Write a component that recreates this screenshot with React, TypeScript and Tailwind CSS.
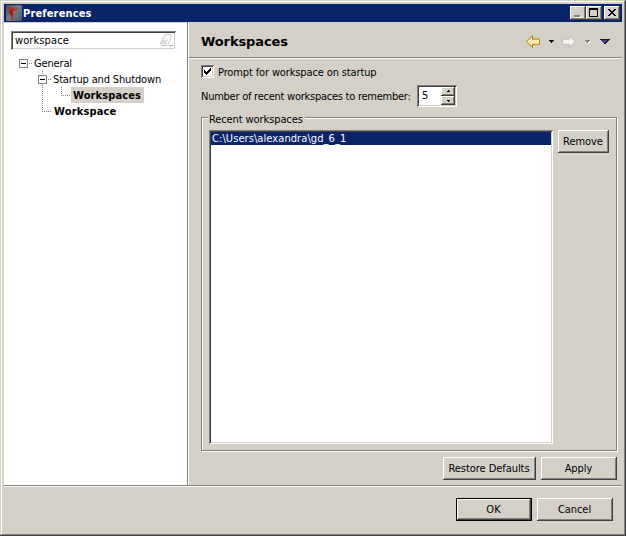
import React from 'react';

const raised =
  'shadow-[inset_-1px_-1px_#404040,inset_1px_1px_#fff,inset_-2px_-2px_#808080]';
const sunken =
  'shadow-[inset_1px_1px_#808080,inset_-1px_-1px_#fff,inset_2px_2px_#404040,inset_-2px_-2px_#d4d0c8]';

function Button({ label, className = '' }: { label: string; className?: string }) {
  return (
    <button className={`flex h-[23px] items-center justify-center whitespace-nowrap bg-[#d4d0c8] pr-px tracking-[-0.05px] ${raised} ${className}`}>
      {label}
    </button>
  );
}

function AppIcon() {
  return (
    <svg width="16" height="16" viewBox="0 0 16 16" className="shrink-0">
      <defs>
        <linearGradient id="tile" x2="1" y2="1">
          <stop stopColor="#4c5358" />
          <stop offset=".5" stopColor="#6f7b81" />
          <stop offset="1" stopColor="#4a5c66" />
        </linearGradient>
      </defs>
      <rect width="16" height="16" rx="1" fill="url(#tile)" />
      <path d="M1 1l2 1 1.500 2L6 2.500h1.500V4L14 3.200 8 5.500 6.500 7.500 7 10l-.5 5h-1L5 10 3 8l.5-2.500z" fill="#cc1c1c" />
      <path d="M3 5.500l3 .5 1 3-2 1-2-2z" fill="#a81418" />
    </svg>
  );
}

function TitleButton({ children, className }: { children: React.ReactNode; className: string }) {
  return (
    <button className={`h-[14px] w-4 bg-[#d4d0c8] ${raised} ${className}`}>
      <svg width="16" height="14" shapeRendering="crispEdges">{children}</svg>
    </button>
  );
}

function Expander() {
  return (
    <svg width="13" height="9" className="shrink-0" shapeRendering="crispEdges">
      <path d="M.5 .5h8v8h-8z" fill="#fff" stroke="#808080" />
      <path d="M2 4h5v1H2z" fill="#000" />
      <path d="M10 4h1v1h-1zM12 4h1v1h-1z" fill="#808080" />
    </svg>
  );
}

function Tree() {
  return (
    <div className="relative mt-[5px]">
      <svg className="absolute left-0 top-0" width="80" height="64" shapeRendering="crispEdges">
        <g stroke="#808080" strokeDasharray="1 1" fill="none">
          <path d="M38.500 16v40M38 56.500h10M57.500 32v8M57 40.500h11" />
        </g>
      </svg>
      <div className="relative flex h-4 items-center pl-[15px]">
        <Expander />
        <span className="ml-[2px] pt-[2px] tracking-[-0.15px]">General</span>
      </div>
      <div className="relative flex h-4 items-center pl-[34px]">
        <Expander />
        <span className="ml-[2px] pt-[2px] tracking-[-0.15px]">Startup and Shutdown</span>
      </div>
      <div className="relative flex h-4 items-center pl-[67px]">
        <span className="flex h-4 w-[73px] items-center bg-[#d4d0c8] pl-[2px] pt-[2px] font-bold tracking-[0.12px]">Workspaces</span>
      </div>
      <div className="relative flex h-4 items-center pl-[50px] pt-[2px] font-bold tracking-[0.15px]">Workspace</div>
    </div>
  );
}

function NavIcons() {
  return (
    <svg width="90" height="14" viewBox="0 0 90 14">
      <defs>
        <linearGradient id="back" x2="0" y2="1">
          <stop stopColor="#fffbe0" />
          <stop offset="1" stopColor="#ffdc80" />
        </linearGradient>
      </defs>
      <path d="M.7 6.500L6.500 .9v3.200h7v5.300h-7v3.200z" fill="url(#back)" stroke="#bb7b0b" />
      <path d="M49.300 6.500L43.500 .9v3.200h-7v5.300h7v3.200z" fill="#f4f4f2" stroke="#bab9b4" />
      <g shapeRendering="crispEdges">
        <path d="M23 5h5v1h-1v1h-1v1h-1V7h-1V6h-1z" fill="#000" />
        <path d="M60 6h5v1h-1v1h-1v1h-1z" fill="#fff" />
        <path d="M59 5h5v1h-1v1h-1v1h-1V7h-1V6h-1z" fill="#808080" />
        <path d="M74 4h10v1h-1v1h-1v1h-1v1h-1v1h-2V8h-1V7h-1V6h-1V5h-1z" fill="#17172c" />
        <path d="M75 5h6v1h-1v1h-1v1h-2V7h-1V6h-1z" fill="#45447a" />
      </g>
    </svg>
  );
}

function Spinner() {
  return (
    <div className={`flex h-[22px] w-10 bg-white p-[2px] ${sunken}`}>
      <span className="flex w-[22px] items-center pl-[3px]">5</span>
      <div className="flex w-[14px] flex-col">
        <button className={`h-[9px] bg-[#d4d0c8] ${raised}`}>
          <svg width="14" height="9" shapeRendering="crispEdges"><path d="M7 3h1v1h1v1H6V4h1z" /></svg>
        </button>
        <button className={`h-[9px] bg-[#d4d0c8] ${raised}`}>
          <svg width="14" height="9" shapeRendering="crispEdges"><path d="M6 4h3v1H8v1H7V5H6z" /></svg>
        </button>
      </div>
    </div>
  );
}

export default function App() {
  return (
    <div className="h-[536px] w-[626px] overflow-hidden bg-[#d4d0c8] p-1 font-['DejaVu_Sans_Condensed','DejaVu_Sans',sans-serif] text-[11px] leading-[14px] text-black [font-stretch:condensed] shadow-[inset_-1px_-1px_#404040,inset_1px_1px_#d4d0c8,inset_-2px_-2px_#808080,inset_2px_2px_#fff]">
      <header className="flex h-[18px] items-center bg-[#0a246a] pl-[2px] pr-[2px] text-white">
        <AppIcon />
        <h1 className="ml-px flex-1 pt-px text-[11px] font-bold tracking-[0.15px]">Preferences</h1>
        <TitleButton className="">
          <path d="M5 10h6v2H5z" fill="#fff" />
          <path d="M4 9h6v2H4z" fill="#808080" />
        </TitleButton>
        <TitleButton className="mr-[2px]">
          <path d="M3 2h9v9H3zM4 4v6h7V4z" fill="#000" fillRule="evenodd" />
        </TitleButton>
        <TitleButton className="">
          <path d="M4 3h2v1h1v1h2V4h1V3h2v1h-1v1h-1v1H9v1h1v1h1v1h1v1h-2V9H9V8H7v1H6v1H4V9h1V8h1V7h1V6H6V5H5V4H4z" fill="#000" />
        </TitleButton>
      </header>

      <main className="flex h-[463px]">
        <aside className="mt-px w-[183px] bg-white pt-2">
          <div className={`ml-[7px] flex h-[19px] w-[165px] items-center justify-between bg-white pl-1 pr-[2px] ${sunken}`}>
            <span className="tracking-[0.1px]">workspace</span>
            <svg width="14" height="13" viewBox="0 0 14 13">
              <path d="M5.500 .5h5.500l.5 2-3.500 8-1 1H2L.5 10 1 8z" fill="#fff" stroke="#c4c4c1" />
              <path d="M2.500 5.500H8L6 10.500H1.500L1 8.500z" fill="#dededb" />
              <path d="M9 11.500h4" stroke="#aaa" />
            </svg>
          </div>
          <Tree />
        </aside>
        <div className="w-[2px] border-l border-[#808080] bg-white" />

        <section className="flex w-[433px] flex-col">
          <div className="flex h-[35px] items-center justify-between pl-3 pr-[6px]">
            <h2 className="mt-[5px] font-['DejaVu_Sans',sans-serif] text-[13px] font-bold tracking-[-0.1px] [font-stretch:normal]">Workspaces</h2>
            <div className="mt-[5px]"><NavIcons /></div>
          </div>
          <div className="h-[2px] border-t border-[#808080] bg-white" />
          <div className="px-3 pt-[6px]">
            <label className="flex h-[13px] items-center">
              <span className={`h-[13px] w-[13px] bg-white ${sunken}`}>
                <svg width="13" height="13" shapeRendering="crispEdges"><path d="M3 5h1v1h1v1h1V6h1V5h1V4h1V3h1v3H9v1H8v1H7v1H6v1H5V9H4V8H3z" /></svg>
              </span>
              <span className="ml-1 pt-[2px] tracking-[-0.13px]">Prompt for workspace on startup</span>
            </label>
            <div className="mt-[7px] flex h-[22px] items-center">
              <span className="w-[216px] whitespace-nowrap pt-[2px] tracking-[-0.25px]">Number of recent workspaces to remember:</span>
              <Spinner />
            </div>
            <fieldset className="h-[344px] w-[416px] pt-[10px]">
              <div className="relative h-[334px] border border-[#808080] shadow-[inset_1px_1px_#fff,1px_1px_#fff]">
                <legend className="absolute left-[6px] top-[-5px] w-[97px] bg-[#d4d0c8] pl-px tracking-[-0.1px]">Recent workspaces</legend>
                <div className="flex gap-[5px] pl-[7px] pt-3">
                  <div className={`h-[314px] w-[344px] bg-white p-[2px] ${sunken}`}>
                    <div className="flex h-[13px] w-[340px] items-center bg-[#0a246a] pl-px pt-px tracking-[0.08px] text-white">C:\Users\alexandra\gd_6_1</div>
                  </div>
                  <Button label="Remove" className="w-[51px]" />
                </div>
              </div>
            </fieldset>
            <div className="mt-[6px] flex w-[416px] justify-end gap-[5px]">
              <Button label="Restore Defaults" className="w-[93px]" />
              <Button label="Apply" className="w-[76px]" />
            </div>
          </div>
        </section>
      </main>
      <footer className="border-t border-[#808080]">
        <div className="h-px bg-white" />
        <div className="flex justify-end gap-[5px] pr-[9px] pt-[11px]">
          <button className="flex h-[23px] w-[76px] items-center justify-center border border-black bg-[#d4d0c8] pr-px shadow-[inset_-1px_-1px_#404040,inset_1px_1px_#fff,inset_-2px_-2px_#808080]">OK</button>
          <Button label="Cancel" className="w-[76px]" />
        </div>
      </footer>
    </div>
  );
}
